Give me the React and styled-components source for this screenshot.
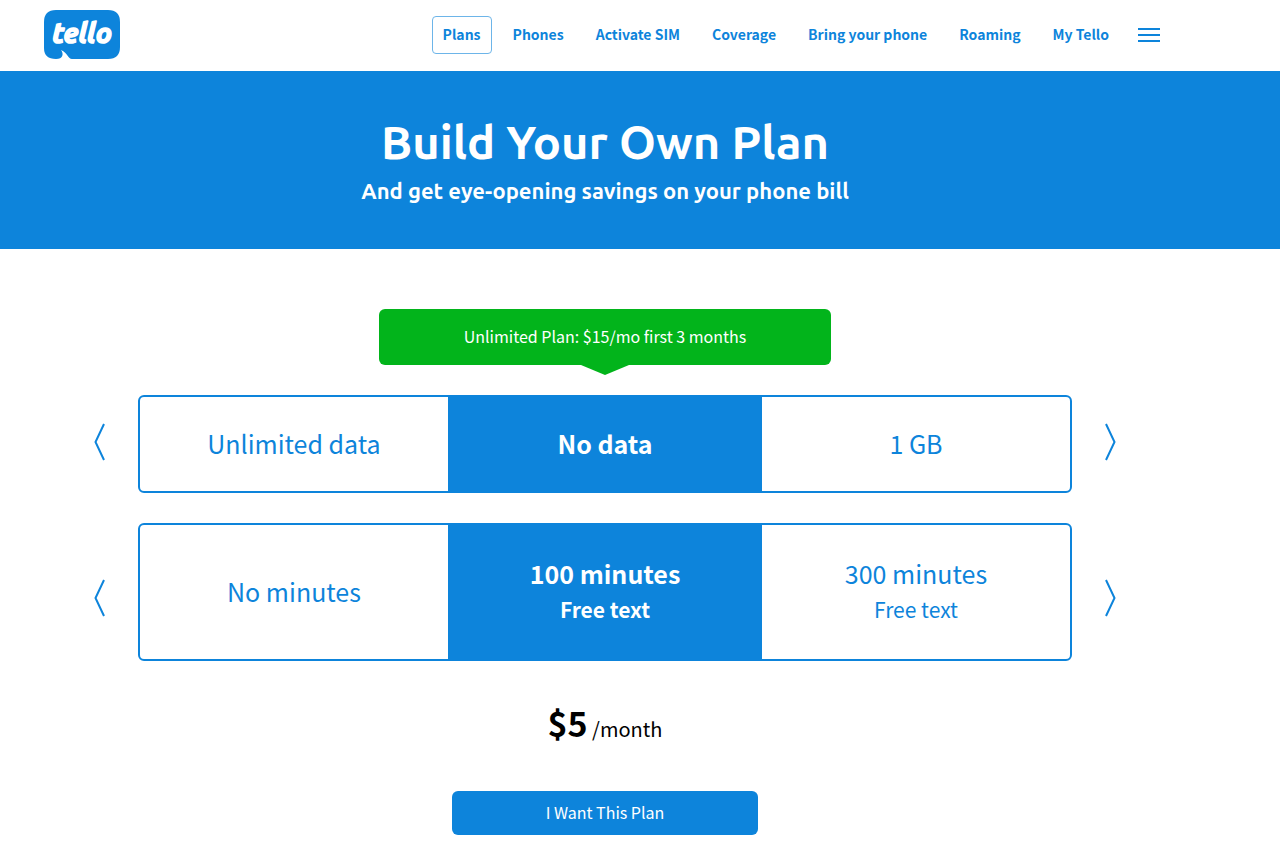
import { useState } from "react";
import styled, { createGlobalStyle } from "styled-components";

const blue = "#0d84db";
const textFont = `"Source Sans Pro", "Noto Sans CJK SC", sans-serif`;
const titleFont = `Ubuntu, "Noto Sans", sans-serif`;

const links = [
  "Plans",
  "Phones",
  "Activate SIM",
  "Coverage",
  "Bring your phone",
  "Roaming",
  "My Tello",
];

const dataOptions = [
  { name: "Unlimited data" },
  { name: "No data" },
  { name: "1 GB" },
];

const minuteOptions = [
  { name: "No minutes" },
  { name: "100 minutes", extra: "Free text" },
  { name: "300 minutes", extra: "Free text" },
];

const Logo = () => (
  <svg width="76" height="50" viewBox="0 0 76 50" role="img" aria-label="tello">
    <path
      fill={blue}
      d="M12 0H64Q76 0 76 12V37Q76 49 64 49H28C24 49 24 43 17 40C20 44 19 49 12 49Q0 49 0 38V12Q0 0 12 0Z"
    />
    <text
      x="38"
      y="33"
      fill="#fff"
      stroke="#fff"
      strokeWidth="1.6"
      strokeLinejoin="round"
      textAnchor="middle"
      fontFamily={titleFont}
      fontSize="28"
      fontWeight="700"
      fontStyle="italic"
    >
      tello
    </text>
  </svg>
);

//One slider line, the picked option always sits in the middle
const Slider = ({ label, options, tall }) => {
  const [current, setCurrent] = useState(1);
  const count = options.length;
  const move = (step) => setCurrent((current + step + count) % count);

  return (
    <SliderRow $tall={tall}>
      <Arrow $tall={tall} aria-label={`Previous ${label}`} onClick={() => move(-1)}>
        <svg width="12" height="38" viewBox="0 0 12 38">
          <path d="M10 1L1.5 19L10 37" />
        </svg>
      </Arrow>
      <Track>
        {[-1, 0, 1].map((step) => {
          const option = options[(current + step + count) % count];
          return (
            <Option key={step} $active={step === 0} onClick={() => move(step)}>
              {option.name}
              {option.extra && <Extra>{option.extra}</Extra>}
            </Option>
          );
        })}
      </Track>
      <Arrow $tall={tall} aria-label={`Next ${label}`} onClick={() => move(1)}>
        <svg width="12" height="38" viewBox="0 0 12 38">
          <path d="M2 1L10.5 19L2 37" />
        </svg>
      </Arrow>
    </SliderRow>
  );
};

const App = () => {
  return (
    <>
      <GlobalStyle />
      <Header>
        <LogoLink href="#home">
          <Logo />
        </LogoLink>
        <Nav>
          {links.map((link) => (
            <NavLink key={link} href="#nav" $active={link === "Plans"}>
              {link}
            </NavLink>
          ))}
          <MenuButton aria-label="Menu">
            <svg width="22" height="16" viewBox="0 0 22 16">
              <path d="M0 2H22M0 8H22M0 14H22" />
            </svg>
          </MenuButton>
        </Nav>
      </Header>
      <Hero>
        <h1>Build Your Own Plan</h1>
        <h2>And get eye-opening savings on your phone bill</h2>
      </Hero>
      <Main>
        <Promo>Unlimited Plan: $15/mo first 3 months</Promo>
        <Slider label="data" options={dataOptions} />
        <Slider label="minutes" options={minuteOptions} tall />
        <Price>
          <strong>$5</strong> /month
        </Price>
        <WantButton>I Want This Plan</WantButton>
      </Main>
    </>
  );
};

const GlobalStyle = createGlobalStyle`
  * {
    box-sizing: border-box;
  }
  body {
    margin: 0;
    background: #fff;
    font-family: ${textFont};
  }
  button {
    padding: 0;
    border: none;
    background: none;
    font-family: inherit;
    cursor: pointer;
  }
  svg {
    display: block;
  }
`;

const Header = styled.header`
  display: flex;
  align-items: center;
  justify-content: space-between;
  padding: 10px 120px 11px 44px;
`;

const LogoLink = styled.a`
  display: block;
`;

const Nav = styled.nav`
  display: flex;
  align-items: center;
  gap: 10px;
`;

const NavLink = styled.a`
  padding: 7px 10px 9px;
  border: 1px solid ${({ $active }) => ($active ? "#6db5e9" : "transparent")};
  border-radius: 4px;
  color: ${blue};
  font-size: 14px;
  font-weight: 700;
  line-height: 20px;
  text-decoration: none;
  white-space: nowrap;
`;

const MenuButton = styled.button`
  margin-left: 8px;
  path {
    stroke: ${blue};
    stroke-width: 2;
  }
`;

const Hero = styled.section`
  padding: 42px 70px 38px 0;
  background: ${blue};
  color: #fff;
  font-family: ${titleFont};
  text-align: center;
  h1 {
    margin: 0;
    font-size: 47px;
    font-weight: 600;
    line-height: 58px;
  }
  h2 {
    margin: 0;
    font-size: 22px;
    font-weight: 600;
    line-height: 40px;
  }
`;

const Main = styled.main`
  display: flex;
  flex-direction: column;
  align-items: center;
  gap: 30px;
  padding: 60px 164px 20px 94px;
`;

const Promo = styled.div`
  position: relative;
  width: 452px;
  padding: 15px 16px 17px;
  border-radius: 6px;
  background: #02b41b;
  color: #fff;
  font-size: 16px;
  line-height: 24px;
  text-align: center;
  &::after {
    content: "";
    position: absolute;
    top: 100%;
    left: 50%;
    margin-left: -24px;
    border: 24px solid transparent;
    border-top: 10px solid #02b41b;
    border-bottom: none;
  }
`;

const SliderRow = styled.div`
  display: flex;
  align-items: flex-start;
  gap: 32px;
  width: 100%;
  height: ${({ $tall }) => ($tall ? "138px" : "98px")};
`;

const Arrow = styled.button`
  height: ${({ $tall }) => ($tall ? "150px" : "94px")};
  path {
    fill: none;
    stroke: ${blue};
    stroke-width: 2;
  }
`;

const Track = styled.div`
  flex: 1;
  display: grid;
  grid-template-columns: 1fr 314px 1fr;
  height: 100%;
  border: 2px solid ${blue};
  border-radius: 6px;
`;

const Option = styled.button`
  padding-bottom: 3px;
  background: ${({ $active }) => ($active ? blue : "transparent")};
  color: ${({ $active }) => ($active ? "#fff" : blue)};
  font-size: 25px;
  font-weight: ${({ $active }) => ($active ? 700 : 400)};
  line-height: 36px;
`;

const Extra = styled.span`
  display: block;
  font-size: 21px;
`;

const Price = styled.p`
  margin: 0;
  color: #000;
  font-size: 20px;
  line-height: 64px;
  strong {
    font-size: 34px;
  }
`;

const WantButton = styled.button`
  width: 306px;
  height: 44px;
  padding-bottom: 2px;
  border-radius: 6px;
  background: ${blue};
  color: #fff;
  font-size: 16px;
`;

export default App;
